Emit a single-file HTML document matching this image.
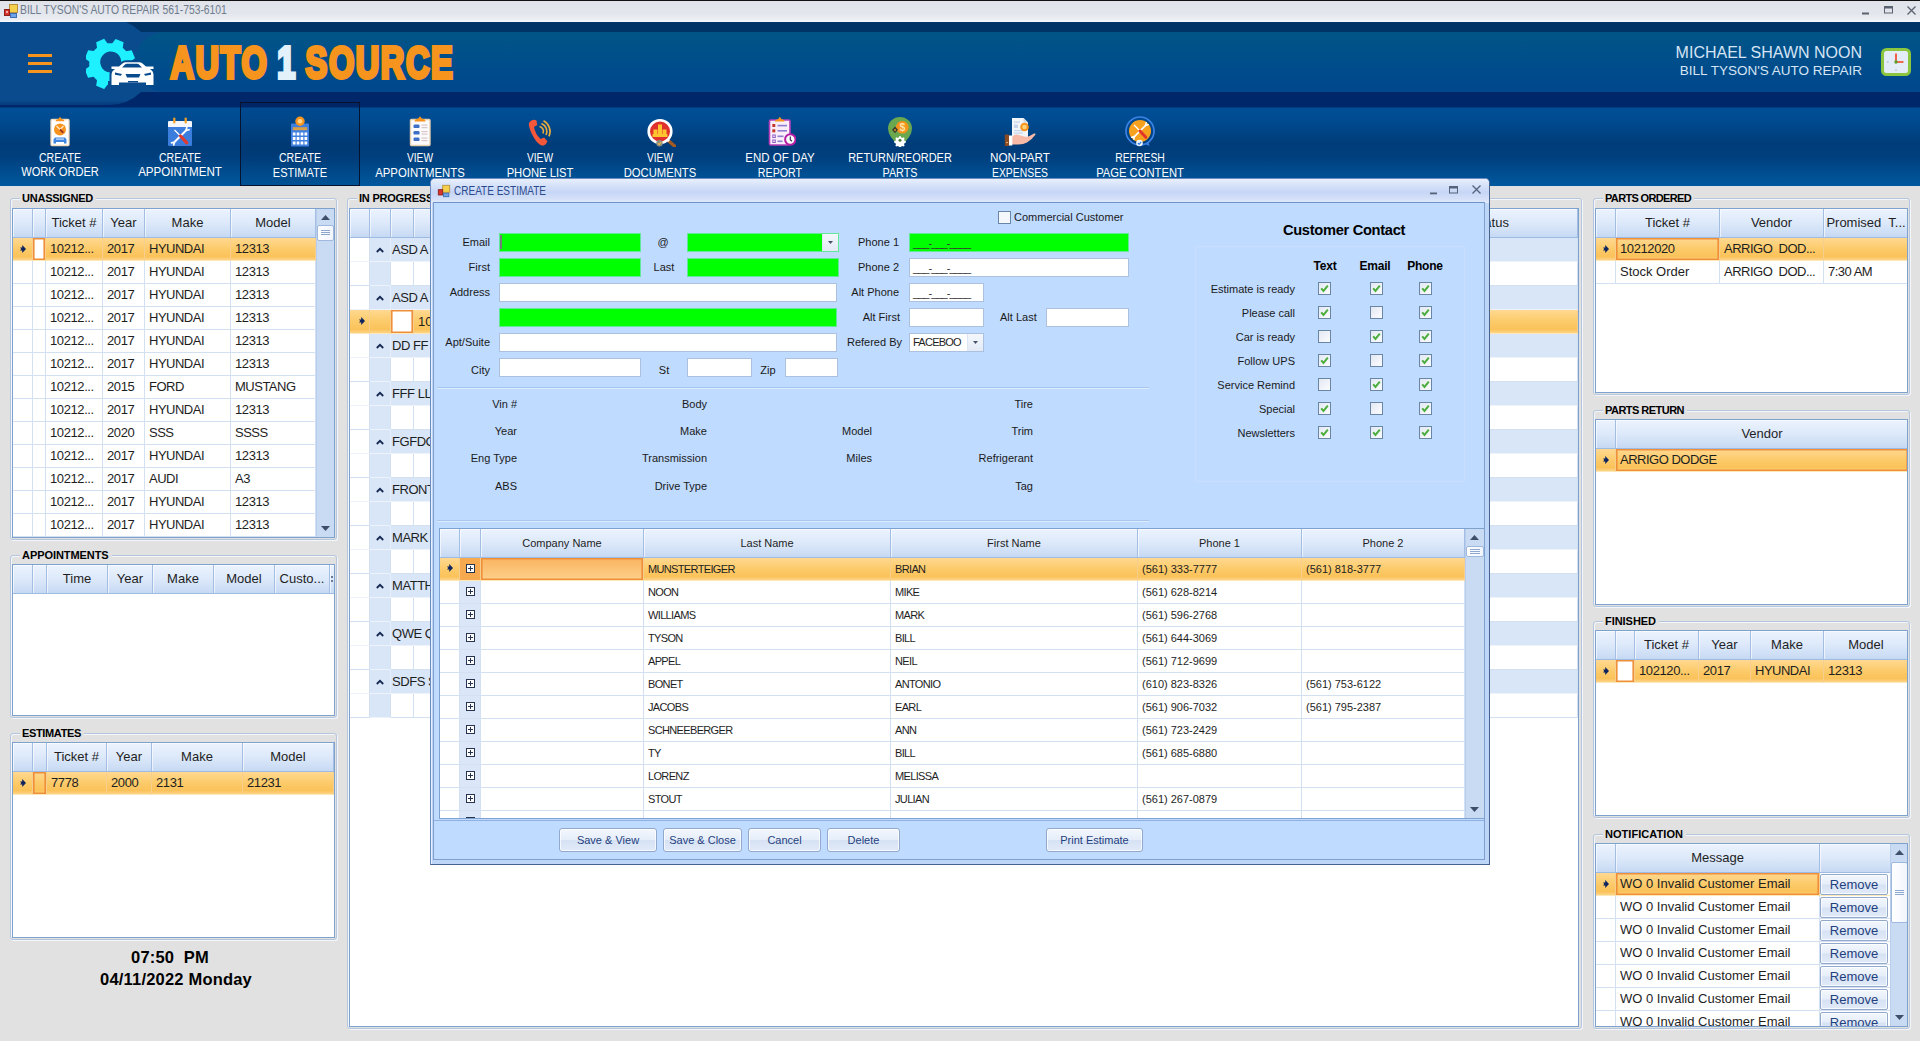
<!DOCTYPE html><html><head><meta charset="utf-8"><title>BILL TYSON'S AUTO REPAIR 561-753-6101</title><style>
*{box-sizing:border-box}
html,body{margin:0;padding:0}
body{width:1920px;height:1041px;overflow:hidden;background:#e1e1e1;font-family:"Liberation Sans","DejaVu Sans",sans-serif;font-size:12.5px;color:#1e1e1e;position:relative}
.abs{position:absolute}
#titlebar{left:0;top:0;width:1920px;height:22px;background:linear-gradient(#dfe2e8 0,#e3e6ec 60%,#eceef2 88%,#f6fbff 100%);border-top:1px solid #111}
#titlebar .t{left:20px;top:1px;font-size:12px;color:#6f7c8e;line-height:16px;white-space:nowrap;transform-origin:0 50%;transform:scaleX(.862)}
#hdr{left:0;top:22px;width:1920px;height:164px;background:
 linear-gradient(#003466 0,#003466 10px,#005585 10px,#00508a 30px,#00478d 70px,#00276a 70px,#00276a 85px,#004f97 86px,#004a8f 100px,#003c78 122px,#003f7e 135px,#00599f 164px)}
.tb{top:102px;width:120px;height:84px;color:#fff;text-align:center;font-size:12.5px;line-height:15px}
.tb .l{position:absolute;left:0;width:120px;top:48px;white-space:nowrap}
.tb svg{position:absolute;left:44px;top:13px}
.tb.sel{border:1px solid #06122e;background:rgba(0,20,70,.08)}
.gb{border:1px solid #b4c6de;border-radius:3px;box-shadow:inset 1px 1px 0 #f4f6fa,1px 1px 0 #f4f6fa}
.gbt{font-weight:bold;font-size:11px;line-height:13px;background:#e1e1e1;padding:0 3px 0 2px;color:#000;white-space:nowrap}
.grid{border:1px solid #7da2ce;background:#fff;overflow:hidden}
.gh{display:flex;height:29px;border-bottom:1px solid #9ebbe3}
.gh>div{height:28px;line-height:27px;text-align:center;border-right:1px solid #a3bde3;background:linear-gradient(#ebf3fd 0,#dde9fa 50%,#c6d9f3 100%);box-shadow:inset 1px 1px 0 rgba(255,255,255,.6);white-space:nowrap;overflow:hidden;flex:none;font-size:13px}
.gr{display:flex;height:23px}
.gr>div{height:23px;line-height:22px;border-right:1px solid #d3e0f2;border-bottom:1px solid #d3e0f2;padding-left:4px;white-space:nowrap;overflow:hidden;flex:none;font-size:13px}
.c{letter-spacing:-.5px}
.n{letter-spacing:-.4px}
.gr.sel>div{background:linear-gradient(#ffd991 0,#fccb6b 48%,#fbc25a 84%,#fdd486 100%);border-right-color:#f6cf8e;border-bottom-color:#fde9b8}
.gr>div.ind{padding:0}
.foc{box-shadow:inset 0 0 0 1.6px #f08f3a}
.sb{background:#c9daf3;border-left:1px solid #b9cdec}
.inp{background:#fff;border:1px solid #abc1de;height:19px}
.grn{background:#00ff00;border:1px solid #63e89a}
.lbl{font-size:11px;line-height:13px;white-space:nowrap;color:#1a1a1a}
.r{text-align:right}
.cb{width:13px;height:13px;border:1px solid #6a86a6;background:linear-gradient(135deg,#e3e9f2,#fbfcfe);}

.ipg,.ipr{display:flex;height:24px}
.ipg>div,.ipr>div{height:24px;flex:none;border-bottom:1px solid #d3e0f2;border-right:1px solid #d3e0f2;line-height:24px;white-space:nowrap;overflow:hidden;font-size:13px}
.i0{width:20px;background:#fff}
.i1{width:21px;background:#d9e6f8}
.ipg .i1{border-right-color:#e6eefa}
.ipg>div,.ipr>.i1{border-bottom-color:#eef3fb}
.i2{width:1187px;background:#d9e6f8;padding-left:1px;letter-spacing:-.45px}
.ipr.sel>div{background:linear-gradient(#ffd991 0,#fccb6b 48%,#fbc25a 84%,#fdd486 100%);border-right-color:#f6cf8e;border-bottom-color:#fde9b8}
.ipr.sel>div.i0{}

.dg .gh>div,.dg .gr>div{font-size:11px}
.dg .gh>div{line-height:29px}
.dg .nm{letter-spacing:-.65px}
.dg .gr>div{padding-left:4px}
.dg .gr>div.exp{background:#dbe7f8}
.dg .gr.sel>div.exp{background:#f6a94f}
.dg .gr.sel>div.foc{background:linear-gradient(#f9b45f,#fdd08c)}
.btn{height:24px;border:1px solid #93a9cb;border-radius:3px;background:linear-gradient(#f3f7fd 0,#e6eefa 48%,#d6e2f4 52%,#e1eaf8 100%);box-shadow:inset 0 0 0 1px rgba(255,255,255,.7);font-size:11px;line-height:22px;text-align:center;color:#1f3f7d;white-space:nowrap}
</style></head><body>
<div id="titlebar" class="abs"><svg class="abs" style="left:3px;top:2px" width="16" height="16" viewBox="0 0 16 16"><rect x="6.5" y="1.5" width="8" height="8" fill="#f5d04c" stroke="#b9913a"/><rect x="1.5" y="6.5" width="5" height="6" fill="#d9342b" stroke="#8e1f1a"/><rect x="7.5" y="10.5" width="6" height="4" fill="#6fa2e6" stroke="#3e6fb5"/><rect x="3" y="8" width="2" height="2" fill="#fff" opacity=".6"/></svg>
<div class="abs t">BILL TYSON'S AUTO REPAIR 561-753-6101</div>
<svg class="abs" style="left:1858px;top:2px" width="60" height="16" viewBox="0 0 60 16"><rect x="4" y="9.5" width="7" height="2" fill="#5a6270"/><rect x="26.5" y="3.5" width="8" height="6.5" fill="none" stroke="#5a6270"/><rect x="26" y="3" width="9" height="2.5" fill="#5a6270"/><path d="M49.5 3.5l8 8M57.5 3.5l-8 8" stroke="#5a6270" stroke-width="1.3"/></svg>
</div>
<div id="hdr" class="abs"></div>
<div class="abs" style="left:0;top:22px;width:112px;height:83px;background:#0a4b8d"></div>
<div class="abs" style="left:0;top:22px;width:160px;height:83px;overflow:hidden"><div class="abs" style="left:67px;top:-3px;width:86px;height:86px;border-radius:43px;background:#0a4b8d"></div></div>
<div class="abs" style="left:0;top:100px;width:150px;height:6px;background:linear-gradient(180deg,rgba(0,39,106,0),rgba(0,39,106,.55))"></div>
<div class="abs" style="left:0;top:32px;width:167px;height:60px;background:#0a4b8d"></div>
<div class="abs" style="left:135px;top:32px;width:260px;height:60px;border-radius:30px 0 0 30px;background:linear-gradient(#005585 0,#00508a 33%,#00478d 100%)"></div>
<div class="abs" style="left:28px;top:54px;width:24px;height:3px;background:#f7941d"></div><div class="abs" style="left:28px;top:62px;width:24px;height:3px;background:#f7941d"></div><div class="abs" style="left:28px;top:70px;width:24px;height:3px;background:#f7941d"></div>
<svg class="abs" style="left:86px;top:37px" width="72" height="52" viewBox="0 0 72 52">
<defs><clipPath id="gc"><circle cx="24.700" cy="25" r="28"/></clipPath></defs>
<g transform="translate(24.700,25) scale(1.03) rotate(22.500)" fill="#1ef0ff">
<path d="M-4.200-22.500h8.400l1.300 5.200 4.400 1.800 4.600-2.800 5.900 5.900-2.800 4.600 1.800 4.400 5.200 1.300v8.400l-5.200 1.300-1.800 4.400 2.800 4.600-5.900 5.900-4.600-2.800-4.400 1.800-1.300 5.200h-8.400l-1.300-5.200-4.400-1.800-4.600 2.800-5.900-5.900 2.800-4.600-1.800-4.400-5.200-1.300v-8.400l5.200-1.300 1.800-4.400-2.800-4.600 5.900-5.900 4.600 2.800 4.400-1.800zM0-10.200a10.200 10.200 0 1 0 .01 0z" fill-rule="evenodd"/>
</g>
<g clip-path="url(#gc)"><path d="M25.500 29.500h7.500l3.500-3q1.300-1.300 3.500-1.300h13q2.200 0 3.500 1.300l3.500 3h7.500v2.500h-3.500q3.500 2 3.500 6v10h-7.500v-2.500h-27v2.500h-7.500v-10q0-4 3.500-6h-3.500z" fill="#0a4b8d" stroke="#0a4b8d" stroke-width="4"/><rect x="22" y="44" width="34" height="12" fill="#0a4b8d"/></g>
<path d="M25.500 29.500h7.500l3.500-3q1.300-1.300 3.500-1.300h13q2.200 0 3.500 1.300l3.500 3h7.500v2.500h-3.500q3.500 2 3.500 6v10h-7.500v-2.500h-27v2.500h-7.500v-10q0-4 3.500-6h-3.500z" fill="#fff"/>
<path d="M36 30.500l2.800-2.800q.8-.9 2-.9h10.400q1.200 0 2 .9l2.800 2.800z" fill="#0a4b8d"/>
<path d="M29 35.500l7 1.600-1.200 1.700-5.800-1zM65 35.500l-7 1.600 1.200 1.700 5.800-1zM39.500 37h15l-1.500 3.500h-12zM42 44h10v1.500h-10z" fill="#0a4b8d"/>
</svg>
<div class="abs" style="left:169px;top:34px;height:56px;line-height:56px;white-space:nowrap;font-weight:bold;top:35px;font-size:44.5px;color:#f7941d;-webkit-text-stroke:4px #f7941d;transform-origin:0 50%;transform:scaleX(.73);letter-spacing:2.2px;padding-left:2px;word-spacing:-2.5px">AUTO <span style="color:#e3f1fb;-webkit-text-stroke:4px #e3f1fb">1</span> SOURCE</div>
<div class="abs r" style="left:1560px;width:302px;top:44px;font-size:16px;line-height:18px;color:#d6e4f4;white-space:nowrap">MICHAEL SHAWN NOON</div>
<div class="abs r" style="left:1560px;width:302px;top:63px;font-size:13.5px;line-height:16px;color:#d6e4f4;white-space:nowrap">BILL TYSON'S AUTO REPAIR</div>
<svg class="abs" style="left:1881px;top:48px" width="30" height="28" viewBox="0 0 30 28"><rect x="1.500" y="1.500" width="27" height="25" rx="4" fill="#e4ecf7" stroke="#8cc63f" stroke-width="3"/><path d="M15 14V5.500M15 14h7.500" stroke="#f0401c" stroke-width="1.600" fill="none"/><circle cx="15" cy="14" r="1.700" fill="#5aa02c"/><path d="M15 21.500v1.500M6 14h1.500" stroke="#9fb0c8" stroke-width="1"/></svg>
<div class="abs tb" style="left:0px">
<svg style="left:44px;top:13px" width="32" height="32" viewBox="0 0 32 32"><rect x="7" y="4.500" width="18" height="26" rx="1" fill="#fff" stroke="#f0dcc0" stroke-width="1.300"/><path d="M11.500 6.300q0-2 2.800-2.300l1.700-2.300 1.700 2.300q2.800.3 2.800 2.300z" fill="#f7941d"/><circle cx="16" cy="14.500" r="6" fill="#f7941d"/><path d="M12.500 11l7 7" stroke="#ffe9c8" stroke-width="1.200"/><path d="M19.500 11l-3.500 3.500" stroke="#ffe9c8" stroke-width="1.200"/><path d="M16 14.500l3.400 3.400" stroke="#a3321a" stroke-width="2"/><path d="M11 22.500h10l1.500 2v4h-2.500v-1.500h-8v1.500h-2.500v-4z" fill="#3f86e0"/><rect x="12" y="23.300" width="8" height="1.600" fill="#a9ccf7"/></svg>
<div class="l" style="left:0px;top:49px;transform:scaleX(0.8477)">CREATE</div><div class="l" style="left:0px;top:63px;transform:scaleX(0.888)">WORK ORDER</div>
</div>
<div class="abs tb" style="left:120px">
<svg style="left:44px;top:13px" width="32" height="32" viewBox="0 0 32 32"><rect x="4" y="6" width="24" height="25" rx="1.200" fill="#3b7ddd"/><path d="M4 7.200q0-1.200 1.200-1.200h21.600q1.200 0 1.200 1.200v4.800h-24z" fill="#f4f6fb"/><rect x="9.200" y="2.500" width="2.200" height="6" rx="1.100" fill="#f7a021"/><rect x="20.600" y="2.500" width="2.200" height="6" rx="1.100" fill="#f7a021"/><path d="M22 15.500l-11.500 11.500" stroke="#fff" stroke-width="1.900"/><path d="M22 15.500l.8-3M22 15.500l3-.8M10.500 27l-.8 3M10.500 27l-3 .8" stroke="#fff" stroke-width="1.700" stroke-linecap="round"/><path d="M10.500 15l6 6" stroke="#fff" stroke-width="1.300"/><path d="M16.500 21l6.300 6.800" stroke="#e23a2e" stroke-width="3.200" stroke-linecap="round"/></svg>
<div class="l" style="left:0px;top:49px;transform:scaleX(0.8477)">CREATE</div><div class="l" style="left:0px;top:63px;transform:scaleX(0.9269)">APPOINTMENT</div>
</div>
<div class="abs tb sel" style="left:240px">
<svg style="left:43px;top:12px" width="32" height="32" viewBox="0 0 32 32"><rect x="7" y="8.500" width="18" height="23" rx="1" fill="#3f7fe0"/><circle cx="16" cy="6.300" r="4.700" fill="#f7941d"/><circle cx="16" cy="6.300" r="2.300" fill="#ffd58a"/><rect x="8.800" y="12.200" width="14.400" height="3" fill="#d9a04a"/><g fill="#fff"><rect x="8.800" y="17.500" width="2.700" height="3"/><rect x="12.700" y="17.500" width="2.700" height="3"/><rect x="16.600" y="17.500" width="2.700" height="3"/><rect x="20.500" y="17.500" width="2.700" height="3"/><rect x="8.800" y="22" width="2.700" height="3"/><rect x="12.700" y="22" width="2.700" height="3"/><rect x="16.600" y="22" width="2.700" height="3"/><rect x="20.500" y="22" width="2.700" height="3"/><rect x="8.800" y="26.500" width="2.700" height="3"/><rect x="12.700" y="26.500" width="2.700" height="3"/><rect x="16.600" y="26.500" width="2.700" height="3"/><rect x="20.500" y="26.500" width="2.700" height="3"/></g></svg>
<div class="l" style="left:-1px;top:48px;transform:scaleX(0.8477)">CREATE</div><div class="l" style="left:-1px;top:63px;transform:scaleX(0.8832)">ESTIMATE</div>
</div>
<div class="abs tb" style="left:360px">
<svg style="left:44px;top:13px" width="32" height="32" viewBox="0 0 32 32"><rect x="6.500" y="4.500" width="19.500" height="26" rx="1" fill="#fbfbfd" stroke="#e6cfae" stroke-width="1.400"/><path d="M10.500 6.500q0-2.500 3.500-2.800l2-2.500 2 2.500q3.500.3 3.500 2.800z" fill="#f7941d"/><g fill="#3d6fc4"><rect x="9.500" y="9.500" width="6" height="3.600" rx="1.200"/><rect x="9.500" y="16" width="6" height="3.600" rx="1.200"/><rect x="9.500" y="22.500" width="6" height="3.600" rx="1.200"/></g><g fill="#d9c7c7"><rect x="17.500" y="9.500" width="6" height="1.200"/><rect x="17.500" y="12" width="6" height="1.200"/><rect x="17.500" y="16" width="6" height="1.200"/><rect x="17.500" y="18.500" width="6" height="1.200"/><rect x="17.500" y="22.500" width="6" height="1.200"/><rect x="17.500" y="25" width="6" height="1.200"/></g></svg>
<div class="l" style="left:0px;top:49px;transform:scaleX(0.8137)">VIEW</div><div class="l" style="left:0px;top:64px;transform:scaleX(0.9095)">APPOINTMENTS</div>
</div>
<div class="abs tb" style="left:480px">
<svg style="left:44px;top:13px" width="32" height="32" viewBox="0 0 32 32"><path d="M7.500 5.500q2.500-1.500 5 0l.7 4.500q-1.500 1.200-2.200 1.200l-1 .8q1.200 7 6.500 12l1.200-.5q1-1 2.700-.8l3 3.500q-1 3.500-4.500 4.500-5-1-9-8t-5-12.500q-.5-3 2.600-4.700z" fill="#f4573a"/><g fill="none" stroke="#e8aa3c" stroke-width="1.700"><path d="M15.500 11.500a5 5 0 0 1 3.500 7"/><path d="M17.500 8.500a8.500 8.500 0 0 1 4.500 11.500"/><path d="M19.500 5.800a12 12 0 0 1 5.500 15.500"/></g></svg>
<div class="l" style="left:0px;top:49px;transform:scaleX(0.8137)">VIEW</div><div class="l" style="left:0px;top:64px;transform:scaleX(0.8974)">PHONE LIST</div>
</div>
<div class="abs tb" style="left:600px">
<svg style="left:44px;top:13px" width="32" height="32" viewBox="0 0 32 32"><path d="M23.500 25l7 6" stroke="#a55a22" stroke-width="3.400" stroke-linecap="round"/><path d="M22 23.500l3 2.600" stroke="#fff" stroke-width="2.400"/><circle cx="16" cy="16.500" r="11.300" fill="#e0312c" stroke="#fff" stroke-width="2.600"/><g fill="#ffc531"><rect x="14" y="9.500" width="4" height="11"/><rect x="9.500" y="14.500" width="4" height="6"/><rect x="18.500" y="14.500" width="4" height="6"/><rect x="8.500" y="19" width="15" height="3"/></g><circle cx="15.500" cy="28.300" r="3.200" fill="#8a8f82"/><path d="M14 28.300l1.200 1.200 2-2.300" stroke="#f0b340" stroke-width="1.200" fill="none"/></svg>
<div class="l" style="left:0px;top:49px;transform:scaleX(0.8137)">VIEW</div><div class="l" style="left:0px;top:64px;transform:scaleX(0.8999)">DOCUMENTS</div>
</div>
<div class="abs tb" style="left:720px">
<svg style="left:44px;top:13px" width="32" height="32" viewBox="0 0 32 32"><rect x="5.500" y="5" width="20.500" height="25" rx="1.200" fill="#fbeefb" stroke="#b540b9" stroke-width="1.600"/><path d="M11 6.500q0-2 3-2.300l1.800-2.400 1.800 2.400q3 .3 3 2.300z" fill="#f7941d"/><g fill="#c2382c"><rect x="8.300" y="9" width="3" height="3"/><rect x="8.300" y="14.300" width="3" height="3"/></g><g fill="none" stroke="#8d5fc7" stroke-width="1"><rect x="8.800" y="20" width="2.500" height="2.500"/><rect x="8.800" y="25" width="2.500" height="2.500"/></g><g fill="#8d7fd0"><rect x="13.500" y="9.800" width="9.500" height="1.600"/><rect x="13.500" y="15" width="9.500" height="1.600"/><rect x="13.500" y="20.500" width="6" height="1.600"/><rect x="13.500" y="25.500" width="5" height="1.600"/></g><circle cx="26.300" cy="24.500" r="5.200" fill="#fff" stroke="#b51fa6" stroke-width="2"/><path d="M26.300 21.500v3.300l1.600 1.400" stroke="#3a2a55" stroke-width="1.200" fill="none"/></svg>
<div class="l" style="left:0px;top:49px;transform:scaleX(0.9181)">END OF DAY</div><div class="l" style="left:0px;top:64px;transform:scaleX(0.854)">REPORT</div>
</div>
<div class="abs tb" style="left:840px">
<svg style="left:44px;top:13px" width="32" height="32" viewBox="0 0 32 32"><path d="M16 32q-12-10.500-12-18.500a12 11.500 0 0 1 24 0q0 8-12 18.500z" fill="#6aa84f"/><circle cx="18.300" cy="12.300" r="6.300" fill="#f7941d"/><text x="18.300" y="16.200" font-size="10.500" font-weight="bold" text-anchor="middle" fill="#ffe3a6" font-family="Liberation Sans,sans-serif">$</text><path d="M11 11.500l3 3.200-3 3.600-3-3.600z" fill="#3c3a2c"/><circle cx="11" cy="15" r="1.100" fill="#c9962f"/><g transform="translate(16,25.300)"><path d="M-1-5h2l.5 1.500 1.400.6 1.400-.8 1.400 1.400-.8 1.400.6 1.400 1.500.5v2l-1.500.5-.6 1.400.8 1.400-1.400 1.400-1.400-.8-1.400.6-.5 1.500h-2l-.5-1.500-1.400-.6-1.400.8-1.400-1.400.8-1.400-.6-1.400-1.500-.5v-2l1.500-.5.600-1.400-.8-1.400 1.400-1.400 1.400.800 1.400-.600z" fill="#fff" transform="scale(.82)"/><circle r="1.500" fill="#4e7f3a"/></g></svg>
<div class="l" style="left:0px;top:49px;transform:scaleX(0.8783)">RETURN/REORDER</div><div class="l" style="left:0px;top:64px;transform:scaleX(0.8635)">PARTS</div>
</div>
<div class="abs tb" style="left:960px">
<svg style="left:44px;top:13px" width="32" height="32" viewBox="0 0 32 32"><path d="M8 3h11.500l4.500 4.500v16h-16z" fill="#f2f5fa"/><path d="M19.500 3v4.500h4.500z" fill="#cfd8e6"/><g fill="#c5d3ea"><rect x="10" y="6.500" width="6" height="1.200"/><rect x="10" y="9.500" width="4" height="3.500"/><rect x="10" y="15" width="9" height="1.200"/><rect x="10" y="17.500" width="9" height="1.200"/></g><circle cx="20.500" cy="12" r="4.300" fill="#f7941d"/><circle cx="20.500" cy="12" r="2.300" fill="#ffd27a"/><path d="M8 22q3-3.500 7-2l6 1.800q2 .3 4.500-.8l4.500-2.500q1.800-.5 1.500 1-3 4.500-8.500 8-3.500 2-8.500 2h-7z" fill="#f8b9a6"/><rect x="4.500" y="20.500" width="3.800" height="10" fill="#fff"/><rect x=".8" y="19.500" width="4.200" height="11.500" rx="1" fill="#8c4a22"/><circle cx="3" cy="27.500" r=".8" fill="#f1c27a"/></svg>
<div class="l" style="left:0px;top:49px;transform:scaleX(0.9357)">NON-PART</div><div class="l" style="left:0px;top:64px;transform:scaleX(0.831)">EXPENSES</div>
</div>
<div class="abs tb" style="left:1080px">
<svg style="left:44px;top:13px" width="32" height="32" viewBox="0 0 32 32"><circle cx="16" cy="16" r="14" fill="none" stroke="#3b82e6" stroke-width="1.700"/><circle cx="16" cy="16" r="11" fill="#f7a21f"/><path d="M21.500 10.500l-11 11" stroke="#fff" stroke-width="1.700"/><path d="M21.500 10.500l.7-2.700M21.500 10.500l2.700-.7M10.500 21.500l-.7 2.700M10.500 21.500l-2.700.7" stroke="#fff" stroke-width="1.500" stroke-linecap="round"/><path d="M10 10l6 6" stroke="#fff" stroke-width="1.200"/><path d="M16 16l5.800 6.300" stroke="#e2352b" stroke-width="3" stroke-linecap="round"/><circle cx="15.500" cy="28" r="3.300" fill="#f4f8ff"/><path d="M13.900 28l1.200 1.300 2.100-2.500" stroke="#2f7be0" stroke-width="1.200" fill="none"/><path d="M22 29.500l3.500 1.500-1-3.500z" fill="#3b82e6"/></svg>
<div class="l" style="left:0px;top:49px;transform:scaleX(0.832)">REFRESH</div><div class="l" style="left:0px;top:64px;transform:scaleX(0.8976)">PAGE CONTENT</div>
</div>
<div class="abs gb" style="left:10px;top:198px;width:327px;height:342px"></div>
<div class="abs gbt" style="left:20px;top:192px;letter-spacing:-0.234px">UNASSIGNED</div>
<div class="abs grid" style="left:12px;top:208px;width:323px;height:330px">
<div class="gh">
<div style="width:20px"></div>
<div style="width:13px"></div>
<div style="width:57px">Ticket #</div>
<div style="width:42px">Year</div>
<div style="width:86px">Make</div>
<div style="width:85px">Model</div>
</div>
<div class="gr sel" style="position:relative">
<div class="ind" style="width:20px"><svg width="6" height="8" viewBox="0 0 6 8" style="position:absolute;left:7px;top:7px"><path d="M0 2.500h2.200v-2.500l3.800 4-3.800 4v-2.500h-2.200l1.200-1.500z" fill="#0f2560"/></svg></div>
<div class="foc" style="width:13px;background:#fff !important;padding:0"></div>
<div class="n" style="width:57px">10212...</div>
<div class="n" style="width:42px">2017</div>
<div class="c" style="width:86px">HYUNDAI</div>
<div class="n" style="width:85px">12313</div>
</div>
<div class="gr" style="position:relative">
<div class="ind" style="width:20px"></div>
<div class="" style="width:13px"></div>
<div class="n" style="width:57px">10212...</div>
<div class="n" style="width:42px">2017</div>
<div class="c" style="width:86px">HYUNDAI</div>
<div class="n" style="width:85px">12313</div>
</div>
<div class="gr" style="position:relative">
<div class="ind" style="width:20px"></div>
<div class="" style="width:13px"></div>
<div class="n" style="width:57px">10212...</div>
<div class="n" style="width:42px">2017</div>
<div class="c" style="width:86px">HYUNDAI</div>
<div class="n" style="width:85px">12313</div>
</div>
<div class="gr" style="position:relative">
<div class="ind" style="width:20px"></div>
<div class="" style="width:13px"></div>
<div class="n" style="width:57px">10212...</div>
<div class="n" style="width:42px">2017</div>
<div class="c" style="width:86px">HYUNDAI</div>
<div class="n" style="width:85px">12313</div>
</div>
<div class="gr" style="position:relative">
<div class="ind" style="width:20px"></div>
<div class="" style="width:13px"></div>
<div class="n" style="width:57px">10212...</div>
<div class="n" style="width:42px">2017</div>
<div class="c" style="width:86px">HYUNDAI</div>
<div class="n" style="width:85px">12313</div>
</div>
<div class="gr" style="position:relative">
<div class="ind" style="width:20px"></div>
<div class="" style="width:13px"></div>
<div class="n" style="width:57px">10212...</div>
<div class="n" style="width:42px">2017</div>
<div class="c" style="width:86px">HYUNDAI</div>
<div class="n" style="width:85px">12313</div>
</div>
<div class="gr" style="position:relative">
<div class="ind" style="width:20px"></div>
<div class="" style="width:13px"></div>
<div class="n" style="width:57px">10212...</div>
<div class="n" style="width:42px">2015</div>
<div class="c" style="width:86px">FORD</div>
<div class="c" style="width:85px">MUSTANG</div>
</div>
<div class="gr" style="position:relative">
<div class="ind" style="width:20px"></div>
<div class="" style="width:13px"></div>
<div class="n" style="width:57px">10212...</div>
<div class="n" style="width:42px">2017</div>
<div class="c" style="width:86px">HYUNDAI</div>
<div class="n" style="width:85px">12313</div>
</div>
<div class="gr" style="position:relative">
<div class="ind" style="width:20px"></div>
<div class="" style="width:13px"></div>
<div class="n" style="width:57px">10212...</div>
<div class="n" style="width:42px">2020</div>
<div class="c" style="width:86px">SSS</div>
<div class="c" style="width:85px">SSSS</div>
</div>
<div class="gr" style="position:relative">
<div class="ind" style="width:20px"></div>
<div class="" style="width:13px"></div>
<div class="n" style="width:57px">10212...</div>
<div class="n" style="width:42px">2017</div>
<div class="c" style="width:86px">HYUNDAI</div>
<div class="n" style="width:85px">12313</div>
</div>
<div class="gr" style="position:relative">
<div class="ind" style="width:20px"></div>
<div class="" style="width:13px"></div>
<div class="n" style="width:57px">10212...</div>
<div class="n" style="width:42px">2017</div>
<div class="c" style="width:86px">AUDI</div>
<div class="c" style="width:85px">A3</div>
</div>
<div class="gr" style="position:relative">
<div class="ind" style="width:20px"></div>
<div class="" style="width:13px"></div>
<div class="n" style="width:57px">10212...</div>
<div class="n" style="width:42px">2017</div>
<div class="c" style="width:86px">HYUNDAI</div>
<div class="n" style="width:85px">12313</div>
</div>
<div class="gr" style="position:relative">
<div class="ind" style="width:20px"></div>
<div class="" style="width:13px"></div>
<div class="n" style="width:57px">10212...</div>
<div class="n" style="width:42px">2017</div>
<div class="c" style="width:86px">HYUNDAI</div>
<div class="n" style="width:85px">12313</div>
</div>
<div class="abs sb" style="left:303px;top:0px;width:18px;height:328px"><svg class="abs" style="left:4px;top:6px" width="9" height="5" viewBox="0 0 9 5"><path d="M0 5l4.500-5 4.500 5z" fill="#3f4f6b"/></svg><svg class="abs" style="left:4px;top:317px" width="9" height="5" viewBox="0 0 9 5"><path d="M0 0l4.500 5 4.500-5z" fill="#3f4f6b"/></svg><div class="abs" style="left:0;top:16px;width:17px;height:16px;background:linear-gradient(90deg,#fff,#f1f5fc);border:1px solid #9fb8de;border-radius:2px"><div class="abs" style="left:3px;right:3px;top:4px;height:5px;border-top:1px solid #8ea7cf;border-bottom:1px solid #8ea7cf"><div style="margin-top:1px;height:1px;background:#8ea7cf"></div></div></div></div>
</div>
<div class="abs gb" style="left:10px;top:555px;width:327px;height:163px"></div>
<div class="abs gbt" style="left:20px;top:549px;letter-spacing:-0.067px">APPOINTMENTS</div>
<div class="abs grid" style="left:12px;top:564px;width:323px;height:152px">
<div class="gh">
<div style="width:20px"></div>
<div style="width:14px"></div>
<div style="width:61px">Time</div>
<div style="width:45px">Year</div>
<div style="width:61px">Make</div>
<div style="width:61px">Model</div>
<div style="width:55px">Custo...</div>
<div style="width:6px"><span style="display:block;width:2px;height:2px;background:#6b7a94;margin:11px 0 0 1px;box-shadow:0 4px 0 #6b7a94"></span></div>
</div>

</div>
<div class="abs gb" style="left:10px;top:733px;width:327px;height:207px"></div>
<div class="abs gbt" style="left:20px;top:727px;letter-spacing:-0.349px">ESTIMATES</div>
<div class="abs grid" style="left:12px;top:742px;width:323px;height:196px">
<div class="gh">
<div style="width:20px"></div>
<div style="width:14px"></div>
<div style="width:60px">Ticket #</div>
<div style="width:45px">Year</div>
<div style="width:91px">Make</div>
<div style="width:91px">Model</div>
</div>
<div class="gr sel" style="position:relative">
<div class="ind" style="width:20px"><svg width="6" height="8" viewBox="0 0 6 8" style="position:absolute;left:7px;top:7px"><path d="M0 2.500h2.200v-2.500l3.800 4-3.800 4v-2.500h-2.200l1.200-1.500z" fill="#0f2560"/></svg></div>
<div class="foc" style="width:14px;padding:0"></div>
<div class="n" style="width:60px">7778</div>
<div class="n" style="width:45px">2000</div>
<div class="n" style="width:91px">2131</div>
<div class="n" style="width:91px">21231</div>
</div>

</div>
<div class="abs" style="left:0;top:948px;width:340px;text-align:center;font-weight:bold;font-size:16.5px;line-height:18px;white-space:pre;color:#000;letter-spacing:.2px">07:50  PM</div>
<div class="abs" style="left:6px;top:970px;width:340px;text-align:center;font-weight:bold;font-size:16.5px;line-height:18px;color:#000;letter-spacing:.2px">04/11/2022 Monday</div>
<div class="abs gb" style="left:347px;top:198px;width:1235px;height:831px"></div>
<div class="abs gbt" style="left:357px;top:192px;letter-spacing:-0.219px">IN PROGRESS</div>
<div class="abs grid" style="left:349px;top:208px;width:1230px;height:819px">
<div class="gh"><div style="width:20px"></div><div style="width:21px"></div><div style="width:23px"></div><div style="width:82px"></div><div style="width:300px"></div><div style="width:300px"></div><div style="width:308px"></div><div style="width:174px">Status</div></div>
<div class="ipg"><div class="i0"></div><div class="i1" style="position:relative"><svg width="8" height="6" viewBox="0 0 8 6" style="position:absolute;left:6px;top:9px"><path d="M.8 5l3.200-3.200 3.200 3.200" stroke="#15284f" stroke-width="1.800" fill="none"/></svg></div><div class="i2">ASD A</div></div>
<div class="ipr"><div class="i0"></div><div class="i1"></div><div style="width:23px"></div><div style="width:82px"></div><div style="width:300px"></div><div style="width:300px"></div><div style="width:308px"></div><div style="width:174px"></div></div>
<div class="ipg"><div class="i0"></div><div class="i1" style="position:relative"><svg width="8" height="6" viewBox="0 0 8 6" style="position:absolute;left:6px;top:9px"><path d="M.8 5l3.200-3.200 3.200 3.200" stroke="#15284f" stroke-width="1.800" fill="none"/></svg></div><div class="i2">ASD A</div></div>
<div class="ipr sel" style="position:relative"><div class="i0" style="position:relative"><svg width="6" height="8" viewBox="0 0 6 8" style="position:absolute;left:9px;top:7px"><path d="M0 2.500h2.200v-2.500l3.800 4-3.800 4v-2.500h-2.200l1.200-1.500z" fill="#0f2560"/></svg></div><div class="i1"></div><div class="foc" style="width:23px;background:#fff"></div><div style="width:82px;padding-left:4px">10212...</div><div style="width:300px"></div><div style="width:300px"></div><div style="width:308px"></div><div style="width:174px"></div></div>
<div class="ipg"><div class="i0"></div><div class="i1" style="position:relative"><svg width="8" height="6" viewBox="0 0 8 6" style="position:absolute;left:6px;top:9px"><path d="M.8 5l3.200-3.200 3.200 3.200" stroke="#15284f" stroke-width="1.800" fill="none"/></svg></div><div class="i2">DD FF</div></div>
<div class="ipr"><div class="i0"></div><div class="i1"></div><div style="width:23px"></div><div style="width:82px"></div><div style="width:300px"></div><div style="width:300px"></div><div style="width:308px"></div><div style="width:174px"></div></div>
<div class="ipg"><div class="i0"></div><div class="i1" style="position:relative"><svg width="8" height="6" viewBox="0 0 8 6" style="position:absolute;left:6px;top:9px"><path d="M.8 5l3.200-3.200 3.200 3.200" stroke="#15284f" stroke-width="1.800" fill="none"/></svg></div><div class="i2">FFF LLL</div></div>
<div class="ipr"><div class="i0"></div><div class="i1"></div><div style="width:23px"></div><div style="width:82px"></div><div style="width:300px"></div><div style="width:300px"></div><div style="width:308px"></div><div style="width:174px"></div></div>
<div class="ipg"><div class="i0"></div><div class="i1" style="position:relative"><svg width="8" height="6" viewBox="0 0 8 6" style="position:absolute;left:6px;top:9px"><path d="M.8 5l3.200-3.200 3.200 3.200" stroke="#15284f" stroke-width="1.800" fill="none"/></svg></div><div class="i2">FGFDG</div></div>
<div class="ipr"><div class="i0"></div><div class="i1"></div><div style="width:23px"></div><div style="width:82px"></div><div style="width:300px"></div><div style="width:300px"></div><div style="width:308px"></div><div style="width:174px"></div></div>
<div class="ipg"><div class="i0"></div><div class="i1" style="position:relative"><svg width="8" height="6" viewBox="0 0 8 6" style="position:absolute;left:6px;top:9px"><path d="M.8 5l3.200-3.200 3.200 3.200" stroke="#15284f" stroke-width="1.800" fill="none"/></svg></div><div class="i2">FRONT</div></div>
<div class="ipr"><div class="i0"></div><div class="i1"></div><div style="width:23px"></div><div style="width:82px"></div><div style="width:300px"></div><div style="width:300px"></div><div style="width:308px"></div><div style="width:174px"></div></div>
<div class="ipg"><div class="i0"></div><div class="i1" style="position:relative"><svg width="8" height="6" viewBox="0 0 8 6" style="position:absolute;left:6px;top:9px"><path d="M.8 5l3.200-3.200 3.200 3.200" stroke="#15284f" stroke-width="1.800" fill="none"/></svg></div><div class="i2">MARK</div></div>
<div class="ipr"><div class="i0"></div><div class="i1"></div><div style="width:23px"></div><div style="width:82px"></div><div style="width:300px"></div><div style="width:300px"></div><div style="width:308px"></div><div style="width:174px"></div></div>
<div class="ipg"><div class="i0"></div><div class="i1" style="position:relative"><svg width="8" height="6" viewBox="0 0 8 6" style="position:absolute;left:6px;top:9px"><path d="M.8 5l3.200-3.200 3.200 3.200" stroke="#15284f" stroke-width="1.800" fill="none"/></svg></div><div class="i2">MATTH</div></div>
<div class="ipr"><div class="i0"></div><div class="i1"></div><div style="width:23px"></div><div style="width:82px"></div><div style="width:300px"></div><div style="width:300px"></div><div style="width:308px"></div><div style="width:174px"></div></div>
<div class="ipg"><div class="i0"></div><div class="i1" style="position:relative"><svg width="8" height="6" viewBox="0 0 8 6" style="position:absolute;left:6px;top:9px"><path d="M.8 5l3.200-3.200 3.200 3.200" stroke="#15284f" stroke-width="1.800" fill="none"/></svg></div><div class="i2">QWE Q</div></div>
<div class="ipr"><div class="i0"></div><div class="i1"></div><div style="width:23px"></div><div style="width:82px"></div><div style="width:300px"></div><div style="width:300px"></div><div style="width:308px"></div><div style="width:174px"></div></div>
<div class="ipg"><div class="i0"></div><div class="i1" style="position:relative"><svg width="8" height="6" viewBox="0 0 8 6" style="position:absolute;left:6px;top:9px"><path d="M.8 5l3.200-3.200 3.200 3.200" stroke="#15284f" stroke-width="1.800" fill="none"/></svg></div><div class="i2">SDFS S</div></div>
<div class="ipr"><div class="i0"></div><div class="i1"></div><div style="width:23px"></div><div style="width:82px"></div><div style="width:300px"></div><div style="width:300px"></div><div style="width:308px"></div><div style="width:174px"></div></div>
</div>
<div class="abs gb" style="left:1593px;top:198px;width:317px;height:197px"></div>
<div class="abs gbt" style="left:1603px;top:192px;letter-spacing:-0.656px">PARTS ORDERED</div>
<div class="abs grid" style="left:1595px;top:208px;width:313px;height:185px">
<div class="gh">
<div style="width:20px"></div>
<div style="width:104px">Ticket #</div>
<div style="width:104px">Vendor</div>
<div style="width:85px">Promised&nbsp; T...</div>
</div>
<div class="gr sel" style="position:relative">
<div class="ind" style="width:20px"><svg width="6" height="8" viewBox="0 0 6 8" style="position:absolute;left:7px;top:7px"><path d="M0 2.500h2.200v-2.500l3.800 4-3.800 4v-2.500h-2.200l1.200-1.500z" fill="#0f2560"/></svg></div>
<div class="foc n" style="width:104px;">10212020</div>
<div class="c" style="width:104px">ARRIGO&nbsp; DOD...</div>
<div class="" style="width:85px"></div>
</div>
<div class="gr" style="position:relative">
<div class="ind" style="width:20px"></div>
<div class="" style="width:104px">Stock Order</div>
<div class="c" style="width:104px">ARRIGO&nbsp; DOD...</div>
<div class="c" style="width:85px">7:30 AM</div>
</div>

</div>
<div class="abs gb" style="left:1593px;top:410px;width:317px;height:197px"></div>
<div class="abs gbt" style="left:1603px;top:404px;letter-spacing:-0.53px">PARTS RETURN</div>
<div class="abs grid" style="left:1595px;top:419px;width:313px;height:186px">
<div class="gh">
<div style="width:20px"></div>
<div style="width:293px">Vendor</div>
</div>
<div class="gr sel" style="position:relative">
<div class="ind" style="width:20px"><svg width="6" height="8" viewBox="0 0 6 8" style="position:absolute;left:7px;top:7px"><path d="M0 2.500h2.200v-2.500l3.800 4-3.800 4v-2.500h-2.200l1.200-1.500z" fill="#0f2560"/></svg></div>
<div class="foc c" style="width:293px;">ARRIGO DODGE</div>
</div>

</div>
<div class="abs gb" style="left:1593px;top:621px;width:317px;height:197px"></div>
<div class="abs gbt" style="left:1603px;top:615px;letter-spacing:-0.043px">FINISHED</div>
<div class="abs grid" style="left:1595px;top:630px;width:313px;height:186px">
<div class="gh">
<div style="width:20px"></div>
<div style="width:19px"></div>
<div style="width:64px">Ticket #</div>
<div style="width:52px">Year</div>
<div style="width:73px">Make</div>
<div style="width:85px">Model</div>
</div>
<div class="gr sel" style="position:relative">
<div class="ind" style="width:20px"><svg width="6" height="8" viewBox="0 0 6 8" style="position:absolute;left:7px;top:7px"><path d="M0 2.500h2.200v-2.500l3.800 4-3.800 4v-2.500h-2.200l1.200-1.500z" fill="#0f2560"/></svg></div>
<div class="foc" style="width:19px;background:#fff !important;padding:0"></div>
<div class="n" style="width:64px">102120...</div>
<div class="n" style="width:52px">2017</div>
<div class="c" style="width:73px">HYUNDAI</div>
<div class="n" style="width:85px">12313</div>
</div>

</div>
<div class="abs gb" style="left:1593px;top:834px;width:317px;height:195px"></div>
<div class="abs gbt" style="left:1603px;top:828px;letter-spacing:0.049px">NOTIFICATION</div>
<div class="abs grid" style="left:1595px;top:843px;width:313px;height:184px">
<div class="gh">
<div style="width:20px"></div>
<div style="width:204px">Message</div>
<div style="width:71px"></div>
<div style="width:18px"></div>
</div>
<div class="gr sel" style="position:relative">
<div class="ind" style="width:20px"><svg width="6" height="8" viewBox="0 0 6 8" style="position:absolute;left:7px;top:7px"><path d="M0 2.500h2.200v-2.500l3.800 4-3.800 4v-2.500h-2.200l1.200-1.500z" fill="#0f2560"/></svg></div>
<div class="foc" style="width:204px;">WO 0 Invalid Customer Email</div>
<div class="" style="width:71px;position:relative;padding:0;background:#fff"><div class="btn" style="position:absolute;left:0px;top:1px;width:68px;height:21px;line-height:19px;font-size:13px;border-radius:2px">Remove</div></div>
<div class="" style="width:18px"></div>
</div>
<div class="gr" style="position:relative">
<div class="ind" style="width:20px"></div>
<div class="" style="width:204px;">WO 0 Invalid Customer Email</div>
<div class="" style="width:71px;position:relative;padding:0;background:#fff"><div class="btn" style="position:absolute;left:0px;top:1px;width:68px;height:21px;line-height:19px;font-size:13px;border-radius:2px">Remove</div></div>
<div class="" style="width:18px"></div>
</div>
<div class="gr" style="position:relative">
<div class="ind" style="width:20px"></div>
<div class="" style="width:204px;">WO 0 Invalid Customer Email</div>
<div class="" style="width:71px;position:relative;padding:0;background:#fff"><div class="btn" style="position:absolute;left:0px;top:1px;width:68px;height:21px;line-height:19px;font-size:13px;border-radius:2px">Remove</div></div>
<div class="" style="width:18px"></div>
</div>
<div class="gr" style="position:relative">
<div class="ind" style="width:20px"></div>
<div class="" style="width:204px;">WO 0 Invalid Customer Email</div>
<div class="" style="width:71px;position:relative;padding:0;background:#fff"><div class="btn" style="position:absolute;left:0px;top:1px;width:68px;height:21px;line-height:19px;font-size:13px;border-radius:2px">Remove</div></div>
<div class="" style="width:18px"></div>
</div>
<div class="gr" style="position:relative">
<div class="ind" style="width:20px"></div>
<div class="" style="width:204px;">WO 0 Invalid Customer Email</div>
<div class="" style="width:71px;position:relative;padding:0;background:#fff"><div class="btn" style="position:absolute;left:0px;top:1px;width:68px;height:21px;line-height:19px;font-size:13px;border-radius:2px">Remove</div></div>
<div class="" style="width:18px"></div>
</div>
<div class="gr" style="position:relative">
<div class="ind" style="width:20px"></div>
<div class="" style="width:204px;">WO 0 Invalid Customer Email</div>
<div class="" style="width:71px;position:relative;padding:0;background:#fff"><div class="btn" style="position:absolute;left:0px;top:1px;width:68px;height:21px;line-height:19px;font-size:13px;border-radius:2px">Remove</div></div>
<div class="" style="width:18px"></div>
</div>
<div class="gr" style="position:relative">
<div class="ind" style="width:20px"></div>
<div class="" style="width:204px;">WO 0 Invalid Customer Email</div>
<div class="" style="width:71px;position:relative;padding:0;background:#fff"><div class="btn" style="position:absolute;left:0px;top:1px;width:68px;height:21px;line-height:19px;font-size:13px;border-radius:2px">Remove</div></div>
<div class="" style="width:18px"></div>
</div>
<div class="abs sb" style="left:294px;top:0px;width:18px;height:182px"><svg class="abs" style="left:4px;top:6px" width="9" height="5" viewBox="0 0 9 5"><path d="M0 5l4.500-5 4.500 5z" fill="#3f4f6b"/></svg><svg class="abs" style="left:4px;top:171px" width="9" height="5" viewBox="0 0 9 5"><path d="M0 0l4.500 5 4.500-5z" fill="#3f4f6b"/></svg><div class="abs" style="left:0;top:18px;width:17px;height:61px;background:linear-gradient(90deg,#fff,#f1f5fc);border:1px solid #9fb8de;border-radius:2px"><div class="abs" style="left:3px;right:3px;top:27px;height:5px;border-top:1px solid #8ea7cf;border-bottom:1px solid #8ea7cf"><div style="margin-top:1px;height:1px;background:#8ea7cf"></div></div></div></div>
</div>
<div class="abs" style="left:430px;top:178px;width:1060px;height:687px;border:1px solid #6c8cc0;border-right-color:#46628f;border-bottom-color:#46628f;border-radius:5px 5px 0 0;background:#bdd5f6;box-shadow:inset 1px 1px 0 #e6effc">
<div class="abs" style="left:0;top:0;width:1058px;height:24px;border-radius:4px 4px 0 0;background:linear-gradient(#e9f0fc 0,#d7e3f9 25%,#c6d6f6 55%,#d3dff8 80%,#e2eafb 100%)"></div>
<svg class="abs" style="left:6px;top:5px" width="14" height="14" viewBox="0 0 16 16"><rect x="6.500" y="1.500" width="8" height="8" fill="#f5d04c" stroke="#b9913a"/><rect x="1.500" y="6.500" width="5" height="6" fill="#d9342b" stroke="#8e1f1a"/><rect x="7.500" y="10.500" width="6" height="4" fill="#6fa2e6" stroke="#3e6fb5"/></svg>
<div class="abs" style="left:23px;top:5px;font-size:12px;line-height:14px;color:#2b4a8c;white-space:nowrap;transform-origin:0 50%;transform:scaleX(.835)">CREATE ESTIMATE</div>
<svg class="abs" style="left:996px;top:4px" width="60" height="14" viewBox="0 0 60 14"><rect x="3" y="9.500" width="7" height="1.800" fill="#56627a"/><rect x="22.500" y="3.500" width="8" height="6.500" fill="none" stroke="#56627a"/><rect x="22" y="3" width="9" height="2.500" fill="#56627a"/><path d="M45.500 2.500l8 8M53.500 2.500l-8 8" stroke="#56627a" stroke-width="1.300"/></svg>
<div class="abs" style="left:2px;top:23px;width:1052px;height:658px;background:#bfdbff;border:1px solid #7f9fd0;border-top-color:#6f93cb"></div>
<div class="abs cb" style="left:567px;top:32px;background:#f4f7fb"></div>
<div class="abs lbl" style="left:583px;top:32px">Commercial Customer</div>
<div class="abs lbl r" style="left:-61px;width:120px;top:57px">Email</div>
<div class="abs inp grn" style="left:68px;top:54px;width:142px"><div style="position:absolute;left:0px;top:1px;width:2px;height:14px;background:#6f7f74"></div></div>
<div class="abs lbl" style="left:192px;width:80px;text-align:center;top:57px">@</div>
<div class="abs inp grn" style="left:256px;top:54px;width:152px"><div style="position:absolute;right:0;top:0;width:16px;height:17px;background:linear-gradient(#f4f7fc,#e3eaf6);border-left:1px solid #dde6f4"><svg width="5" height="3" viewBox="0 0 5 3" style="position:absolute;left:5px;top:7px"><path d="M0 0h5l-2.500 3z" fill="#46526b"/></svg></div></div>
<div class="abs lbl r" style="left:348px;width:120px;top:57px">Phone 1</div>
<div class="abs inp grn" style="left:478px;top:54px;width:220px"><div style="font-size:11px;line-height:19px;padding-left:3px;letter-spacing:-.95px;color:#333">___-___-____</div></div>
<div class="abs lbl r" style="left:-61px;width:120px;top:82px">First</div>
<div class="abs inp grn" style="left:68px;top:79px;width:142px"></div>
<div class="abs lbl" style="left:193px;width:80px;text-align:center;top:82px">Last</div>
<div class="abs inp grn" style="left:256px;top:79px;width:152px"></div>
<div class="abs lbl r" style="left:348px;width:120px;top:82px">Phone 2</div>
<div class="abs inp " style="left:478px;top:79px;width:220px"><div style="font-size:11px;line-height:19px;padding-left:3px;letter-spacing:-.95px;color:#333">___-___-____</div></div>
<div class="abs lbl r" style="left:-61px;width:120px;top:107px">Address</div>
<div class="abs inp inp" style="left:68px;top:104px;width:338px"></div>
<div class="abs lbl r" style="left:348px;width:120px;top:107px">Alt Phone</div>
<div class="abs inp " style="left:478px;top:104px;width:75px"><div style="font-size:11px;line-height:19px;padding-left:3px;letter-spacing:-.95px;color:#333">___-___-____</div></div>
<div class="abs inp grn" style="left:68px;top:129px;width:338px"></div>
<div class="abs lbl r" style="left:349px;width:120px;top:132px">Alt First</div>
<div class="abs inp inp" style="left:478px;top:129px;width:75px"></div>
<div class="abs lbl" style="left:569px;top:132px">Alt Last</div>
<div class="abs inp inp" style="left:615px;top:129px;width:83px"></div>
<div class="abs lbl r" style="left:-61px;width:120px;top:157px">Apt/Suite</div>
<div class="abs inp inp" style="left:68px;top:154px;width:338px"></div>
<div class="abs lbl r" style="left:351px;width:120px;top:157px">Refered By</div>
<div class="abs inp " style="left:478px;top:154px;width:75px"><div style="font-size:11px;line-height:17px;padding-left:3px;letter-spacing:-.75px">FACEBOO</div><div style="position:absolute;right:0;top:0;width:16px;height:17px;background:linear-gradient(#f4f7fc,#e3eaf6);border-left:1px solid #dde6f4"><svg width="5" height="3" viewBox="0 0 5 3" style="position:absolute;left:5px;top:7px"><path d="M0 0h5l-2.500 3z" fill="#46526b"/></svg></div></div>
<div class="abs lbl r" style="left:-61px;width:120px;top:185px">City</div>
<div class="abs inp inp" style="left:68px;top:179px;width:142px"></div>
<div class="abs lbl" style="left:193px;width:80px;text-align:center;top:185px">St</div>
<div class="abs inp inp" style="left:256px;top:179px;width:65px"></div>
<div class="abs lbl" style="left:297px;width:80px;text-align:center;top:185px">Zip</div>
<div class="abs inp inp" style="left:354px;top:179px;width:53px"></div>
<div class="abs" style="left:6px;top:208px;width:712px;height:2px;border-top:1px solid #a9c6ee;border-bottom:1px solid #dcebff"></div>
<div class="abs" style="left:6px;top:341px;width:712px;height:2px;border-top:1px solid #a9c6ee;border-bottom:1px solid #dcebff"></div>
<div class="abs lbl r" style="left:-34px;width:120px;top:219px">Vin #</div>
<div class="abs lbl r" style="left:-34px;width:120px;top:246px">Year</div>
<div class="abs lbl r" style="left:-34px;width:120px;top:273px">Eng Type</div>
<div class="abs lbl r" style="left:-34px;width:120px;top:301px">ABS</div>
<div class="abs lbl r" style="left:156px;width:120px;top:219px">Body</div>
<div class="abs lbl r" style="left:156px;width:120px;top:246px">Make</div>
<div class="abs lbl r" style="left:156px;width:120px;top:273px">Transmission</div>
<div class="abs lbl r" style="left:156px;width:120px;top:301px">Drive Type</div>
<div class="abs lbl r" style="left:321px;width:120px;top:246px">Model</div>
<div class="abs lbl r" style="left:321px;width:120px;top:273px">Miles</div>
<div class="abs lbl r" style="left:482px;width:120px;top:219px">Tire</div>
<div class="abs lbl r" style="left:482px;width:120px;top:246px">Trim</div>
<div class="abs lbl r" style="left:482px;width:120px;top:273px">Refrigerant</div>
<div class="abs lbl r" style="left:482px;width:120px;top:301px">Tag</div>
<div class="abs" style="left:813px;top:42px;width:200px;text-align:center;font-weight:bold;font-size:14.670px;line-height:18px;color:#000;letter-spacing:-.3px">Customer Contact</div>
<div class="abs" style="left:764px;top:67px;width:270px;height:236px;border:1px solid #c9defc"></div>
<div class="abs" style="left:864px;top:80px;width:60px;text-align:center;font-weight:bold;font-size:12px;line-height:14px;color:#000;letter-spacing:-.2px">Text</div>
<div class="abs" style="left:914px;top:80px;width:60px;text-align:center;font-weight:bold;font-size:12px;line-height:14px;color:#000;letter-spacing:-.2px">Email</div>
<div class="abs" style="left:964px;top:80px;width:60px;text-align:center;font-weight:bold;font-size:12px;line-height:14px;color:#000;letter-spacing:-.2px">Phone</div>
<div class="abs lbl r" style="left:744px;width:120px;top:104px">Estimate is ready</div>
<div class="abs cb" style="left:887px;top:103px"><svg width="11" height="11" viewBox="0 0 11 11" style="position:absolute;left:0;top:0"><path d="M2.200 5.300l2.300 2.700 4.300-5.300" stroke="#4cae3c" stroke-width="2" fill="none"/></svg></div>
<div class="abs cb" style="left:939px;top:103px"><svg width="11" height="11" viewBox="0 0 11 11" style="position:absolute;left:0;top:0"><path d="M2.200 5.300l2.300 2.700 4.300-5.300" stroke="#4cae3c" stroke-width="2" fill="none"/></svg></div>
<div class="abs cb" style="left:988px;top:103px"><svg width="11" height="11" viewBox="0 0 11 11" style="position:absolute;left:0;top:0"><path d="M2.200 5.300l2.300 2.700 4.300-5.300" stroke="#4cae3c" stroke-width="2" fill="none"/></svg></div>
<div class="abs lbl r" style="left:744px;width:120px;top:128px">Please call</div>
<div class="abs cb" style="left:887px;top:127px"><svg width="11" height="11" viewBox="0 0 11 11" style="position:absolute;left:0;top:0"><path d="M2.200 5.300l2.300 2.700 4.300-5.300" stroke="#4cae3c" stroke-width="2" fill="none"/></svg></div>
<div class="abs cb" style="left:939px;top:127px"></div>
<div class="abs cb" style="left:988px;top:127px"><svg width="11" height="11" viewBox="0 0 11 11" style="position:absolute;left:0;top:0"><path d="M2.200 5.300l2.300 2.700 4.300-5.300" stroke="#4cae3c" stroke-width="2" fill="none"/></svg></div>
<div class="abs lbl r" style="left:744px;width:120px;top:152px">Car is ready</div>
<div class="abs cb" style="left:887px;top:151px"></div>
<div class="abs cb" style="left:939px;top:151px"><svg width="11" height="11" viewBox="0 0 11 11" style="position:absolute;left:0;top:0"><path d="M2.200 5.300l2.300 2.700 4.300-5.300" stroke="#4cae3c" stroke-width="2" fill="none"/></svg></div>
<div class="abs cb" style="left:988px;top:151px"><svg width="11" height="11" viewBox="0 0 11 11" style="position:absolute;left:0;top:0"><path d="M2.200 5.300l2.300 2.700 4.300-5.300" stroke="#4cae3c" stroke-width="2" fill="none"/></svg></div>
<div class="abs lbl r" style="left:744px;width:120px;top:176px">Follow UPS</div>
<div class="abs cb" style="left:887px;top:175px"><svg width="11" height="11" viewBox="0 0 11 11" style="position:absolute;left:0;top:0"><path d="M2.200 5.300l2.300 2.700 4.300-5.300" stroke="#4cae3c" stroke-width="2" fill="none"/></svg></div>
<div class="abs cb" style="left:939px;top:175px"></div>
<div class="abs cb" style="left:988px;top:175px"><svg width="11" height="11" viewBox="0 0 11 11" style="position:absolute;left:0;top:0"><path d="M2.200 5.300l2.300 2.700 4.300-5.300" stroke="#4cae3c" stroke-width="2" fill="none"/></svg></div>
<div class="abs lbl r" style="left:744px;width:120px;top:200px">Service Remind</div>
<div class="abs cb" style="left:887px;top:199px"></div>
<div class="abs cb" style="left:939px;top:199px"><svg width="11" height="11" viewBox="0 0 11 11" style="position:absolute;left:0;top:0"><path d="M2.200 5.300l2.300 2.700 4.300-5.300" stroke="#4cae3c" stroke-width="2" fill="none"/></svg></div>
<div class="abs cb" style="left:988px;top:199px"><svg width="11" height="11" viewBox="0 0 11 11" style="position:absolute;left:0;top:0"><path d="M2.200 5.300l2.300 2.700 4.300-5.300" stroke="#4cae3c" stroke-width="2" fill="none"/></svg></div>
<div class="abs lbl r" style="left:744px;width:120px;top:224px">Special</div>
<div class="abs cb" style="left:887px;top:223px"><svg width="11" height="11" viewBox="0 0 11 11" style="position:absolute;left:0;top:0"><path d="M2.200 5.300l2.300 2.700 4.300-5.300" stroke="#4cae3c" stroke-width="2" fill="none"/></svg></div>
<div class="abs cb" style="left:939px;top:223px"></div>
<div class="abs cb" style="left:988px;top:223px"><svg width="11" height="11" viewBox="0 0 11 11" style="position:absolute;left:0;top:0"><path d="M2.200 5.300l2.300 2.700 4.300-5.300" stroke="#4cae3c" stroke-width="2" fill="none"/></svg></div>
<div class="abs lbl r" style="left:744px;width:120px;top:248px">Newsletters</div>
<div class="abs cb" style="left:887px;top:247px"><svg width="11" height="11" viewBox="0 0 11 11" style="position:absolute;left:0;top:0"><path d="M2.200 5.300l2.300 2.700 4.300-5.300" stroke="#4cae3c" stroke-width="2" fill="none"/></svg></div>
<div class="abs cb" style="left:939px;top:247px"><svg width="11" height="11" viewBox="0 0 11 11" style="position:absolute;left:0;top:0"><path d="M2.200 5.300l2.300 2.700 4.300-5.300" stroke="#4cae3c" stroke-width="2" fill="none"/></svg></div>
<div class="abs cb" style="left:988px;top:247px"><svg width="11" height="11" viewBox="0 0 11 11" style="position:absolute;left:0;top:0"><path d="M2.200 5.300l2.300 2.700 4.300-5.300" stroke="#4cae3c" stroke-width="2" fill="none"/></svg></div>
<div class="abs grid dg" style="left:8px;top:349px;width:1046px;height:291px">
<div class="gh">
<div style="width:20px"></div>
<div style="width:21px"></div>
<div style="width:163px">Company Name</div>
<div style="width:247px">Last Name</div>
<div style="width:247px">First Name</div>
<div style="width:164px">Phone 1</div>
<div style="width:163px">Phone 2</div>
</div>
<div class="gr sel" style="position:relative">
<div class="ind" style="width:20px;position:relative"><svg width="6" height="8" viewBox="0 0 6 8" style="position:absolute;left:7px;top:6px"><path d="M0 2.500h2.200v-2.500l3.800 4-3.800 4v-2.500h-2.200l1.200-1.500z" fill="#0f2560"/></svg></div>
<div class="exp" style="width:21px;position:relative;padding:0"><svg width="9" height="9" viewBox="0 0 9 9" style="position:absolute;left:6px;top:6px"><rect x=".5" y=".5" width="8" height="8" fill="#fff" stroke="#27344f"/><path d="M2 4.500h5M4.500 2v5" stroke="#27344f" stroke-width="1"/></svg></div>
<div class="foc" style="width:163px"></div>
<div class="nm" style="width:247px">MUNSTERTEIGER</div><div class="nm" style="width:247px">BRIAN</div><div style="width:164px">(561) 333-7777</div><div style="width:163px">(561) 818-3777</div>
</div>
<div class="gr" style="position:relative">
<div class="ind" style="width:20px;position:relative"></div>
<div class="exp" style="width:21px;position:relative;padding:0"><svg width="9" height="9" viewBox="0 0 9 9" style="position:absolute;left:6px;top:6px"><rect x=".5" y=".5" width="8" height="8" fill="#fff" stroke="#27344f"/><path d="M2 4.500h5M4.500 2v5" stroke="#27344f" stroke-width="1"/></svg></div>
<div class="" style="width:163px"></div>
<div class="nm" style="width:247px">NOON</div><div class="nm" style="width:247px">MIKE</div><div style="width:164px">(561) 628-8214</div><div style="width:163px"></div>
</div>
<div class="gr" style="position:relative">
<div class="ind" style="width:20px;position:relative"></div>
<div class="exp" style="width:21px;position:relative;padding:0"><svg width="9" height="9" viewBox="0 0 9 9" style="position:absolute;left:6px;top:6px"><rect x=".5" y=".5" width="8" height="8" fill="#fff" stroke="#27344f"/><path d="M2 4.500h5M4.500 2v5" stroke="#27344f" stroke-width="1"/></svg></div>
<div class="" style="width:163px"></div>
<div class="nm" style="width:247px">WILLIAMS</div><div class="nm" style="width:247px">MARK</div><div style="width:164px">(561) 596-2768</div><div style="width:163px"></div>
</div>
<div class="gr" style="position:relative">
<div class="ind" style="width:20px;position:relative"></div>
<div class="exp" style="width:21px;position:relative;padding:0"><svg width="9" height="9" viewBox="0 0 9 9" style="position:absolute;left:6px;top:6px"><rect x=".5" y=".5" width="8" height="8" fill="#fff" stroke="#27344f"/><path d="M2 4.500h5M4.500 2v5" stroke="#27344f" stroke-width="1"/></svg></div>
<div class="" style="width:163px"></div>
<div class="nm" style="width:247px">TYSON</div><div class="nm" style="width:247px">BILL</div><div style="width:164px">(561) 644-3069</div><div style="width:163px"></div>
</div>
<div class="gr" style="position:relative">
<div class="ind" style="width:20px;position:relative"></div>
<div class="exp" style="width:21px;position:relative;padding:0"><svg width="9" height="9" viewBox="0 0 9 9" style="position:absolute;left:6px;top:6px"><rect x=".5" y=".5" width="8" height="8" fill="#fff" stroke="#27344f"/><path d="M2 4.500h5M4.500 2v5" stroke="#27344f" stroke-width="1"/></svg></div>
<div class="" style="width:163px"></div>
<div class="nm" style="width:247px">APPEL</div><div class="nm" style="width:247px">NEIL</div><div style="width:164px">(561) 712-9699</div><div style="width:163px"></div>
</div>
<div class="gr" style="position:relative">
<div class="ind" style="width:20px;position:relative"></div>
<div class="exp" style="width:21px;position:relative;padding:0"><svg width="9" height="9" viewBox="0 0 9 9" style="position:absolute;left:6px;top:6px"><rect x=".5" y=".5" width="8" height="8" fill="#fff" stroke="#27344f"/><path d="M2 4.500h5M4.500 2v5" stroke="#27344f" stroke-width="1"/></svg></div>
<div class="" style="width:163px"></div>
<div class="nm" style="width:247px">BONET</div><div class="nm" style="width:247px">ANTONIO</div><div style="width:164px">(610) 823-8326</div><div style="width:163px">(561) 753-6122</div>
</div>
<div class="gr" style="position:relative">
<div class="ind" style="width:20px;position:relative"></div>
<div class="exp" style="width:21px;position:relative;padding:0"><svg width="9" height="9" viewBox="0 0 9 9" style="position:absolute;left:6px;top:6px"><rect x=".5" y=".5" width="8" height="8" fill="#fff" stroke="#27344f"/><path d="M2 4.500h5M4.500 2v5" stroke="#27344f" stroke-width="1"/></svg></div>
<div class="" style="width:163px"></div>
<div class="nm" style="width:247px">JACOBS</div><div class="nm" style="width:247px">EARL</div><div style="width:164px">(561) 906-7032</div><div style="width:163px">(561) 795-2387</div>
</div>
<div class="gr" style="position:relative">
<div class="ind" style="width:20px;position:relative"></div>
<div class="exp" style="width:21px;position:relative;padding:0"><svg width="9" height="9" viewBox="0 0 9 9" style="position:absolute;left:6px;top:6px"><rect x=".5" y=".5" width="8" height="8" fill="#fff" stroke="#27344f"/><path d="M2 4.500h5M4.500 2v5" stroke="#27344f" stroke-width="1"/></svg></div>
<div class="" style="width:163px"></div>
<div class="nm" style="width:247px">SCHNEEBERGER</div><div class="nm" style="width:247px">ANN</div><div style="width:164px">(561) 723-2429</div><div style="width:163px"></div>
</div>
<div class="gr" style="position:relative">
<div class="ind" style="width:20px;position:relative"></div>
<div class="exp" style="width:21px;position:relative;padding:0"><svg width="9" height="9" viewBox="0 0 9 9" style="position:absolute;left:6px;top:6px"><rect x=".5" y=".5" width="8" height="8" fill="#fff" stroke="#27344f"/><path d="M2 4.500h5M4.500 2v5" stroke="#27344f" stroke-width="1"/></svg></div>
<div class="" style="width:163px"></div>
<div class="nm" style="width:247px">TY</div><div class="nm" style="width:247px">BILL</div><div style="width:164px">(561) 685-6880</div><div style="width:163px"></div>
</div>
<div class="gr" style="position:relative">
<div class="ind" style="width:20px;position:relative"></div>
<div class="exp" style="width:21px;position:relative;padding:0"><svg width="9" height="9" viewBox="0 0 9 9" style="position:absolute;left:6px;top:6px"><rect x=".5" y=".5" width="8" height="8" fill="#fff" stroke="#27344f"/><path d="M2 4.500h5M4.500 2v5" stroke="#27344f" stroke-width="1"/></svg></div>
<div class="" style="width:163px"></div>
<div class="nm" style="width:247px">LORENZ</div><div class="nm" style="width:247px">MELISSA</div><div style="width:164px"></div><div style="width:163px"></div>
</div>
<div class="gr" style="position:relative">
<div class="ind" style="width:20px;position:relative"></div>
<div class="exp" style="width:21px;position:relative;padding:0"><svg width="9" height="9" viewBox="0 0 9 9" style="position:absolute;left:6px;top:6px"><rect x=".5" y=".5" width="8" height="8" fill="#fff" stroke="#27344f"/><path d="M2 4.500h5M4.500 2v5" stroke="#27344f" stroke-width="1"/></svg></div>
<div class="" style="width:163px"></div>
<div class="nm" style="width:247px">STOUT</div><div class="nm" style="width:247px">JULIAN</div><div style="width:164px">(561) 267-0879</div><div style="width:163px"></div>
</div>
<div class="gr" style="position:relative">
<div class="ind" style="width:20px;position:relative"></div>
<div class="exp" style="width:21px;position:relative;padding:0"><svg width="9" height="9" viewBox="0 0 9 9" style="position:absolute;left:6px;top:6px"><rect x=".5" y=".5" width="8" height="8" fill="#fff" stroke="#27344f"/><path d="M2 4.500h5M4.500 2v5" stroke="#27344f" stroke-width="1"/></svg></div>
<div class="" style="width:163px"></div>
<div class="nm" style="width:247px"></div><div class="nm" style="width:247px"></div><div style="width:164px"></div><div style="width:163px"></div>
</div>
<div class="abs sb" style="left:1025px;top:0px;width:19px;height:289px"><svg class="abs" style="left:4px;top:6px" width="9" height="5" viewBox="0 0 9 5"><path d="M0 5l4.500-5 4.500 5z" fill="#3f4f6b"/></svg><svg class="abs" style="left:4px;top:278px" width="9" height="5" viewBox="0 0 9 5"><path d="M0 0l4.500 5 4.500-5z" fill="#3f4f6b"/></svg><div class="abs" style="left:0;top:17px;width:18px;height:11px;background:linear-gradient(90deg,#fff,#f1f5fc);border:1px solid #9fb8de;border-radius:2px"><div class="abs" style="left:3px;right:3px;top:2px;height:5px;border-top:1px solid #8ea7cf;border-bottom:1px solid #8ea7cf"><div style="margin-top:1px;height:1px;background:#8ea7cf"></div></div></div></div>
</div>
<div class="abs" style="left:3px;top:641px;width:1050px;height:1px;background:#8fb0e0"></div>
<div class="abs btn" style="left:128px;top:649px;width:98px">Save &amp; View</div>
<div class="abs btn" style="left:232px;top:649px;width:79px">Save &amp; Close</div>
<div class="abs btn" style="left:317px;top:649px;width:73px">Cancel</div>
<div class="abs btn" style="left:396px;top:649px;width:73px">Delete</div>
<div class="abs btn" style="left:615px;top:649px;width:97px">Print Estimate</div>
</div>
</body></html>
